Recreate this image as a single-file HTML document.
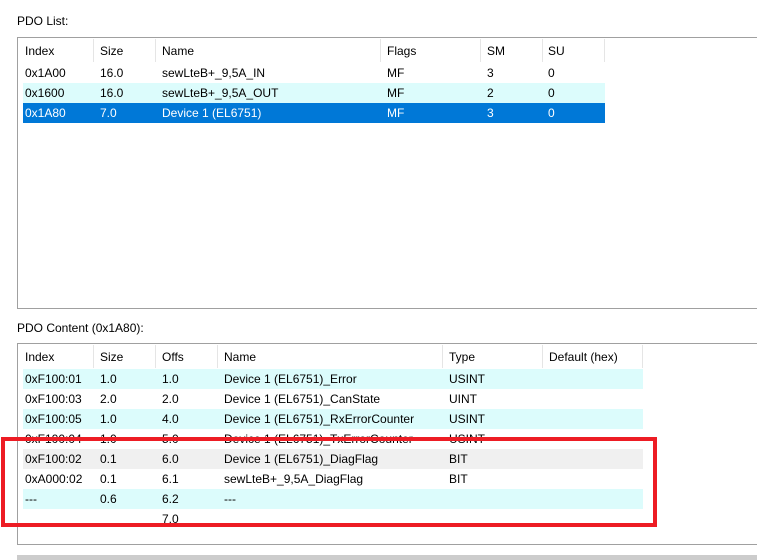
<!DOCTYPE html>
<html><head><style>
body{margin:0;width:757px;height:560px;overflow:hidden;background:#fff;font-family:"Liberation Sans",sans-serif;font-size:12px;color:#000;position:relative}
.a{position:absolute;white-space:nowrap}
.box{position:absolute;border:1px solid #a0a0a0;border-right:none;background:#fff}
.row{position:absolute;height:20px}
.sep{position:absolute;width:1px;background:#e5e5e5}
.t{position:absolute;line-height:20px}
</style></head><body>
<div class="a" style="left:17px;top:14px">PDO List:</div>
<div class="box" style="left:17px;top:37px;width:745px;height:270px"></div>
<div class="row" style="left:23px;top:83px;width:582px;background:#dcfcfc"></div>
<div class="row" style="left:23px;top:103px;width:582px;background:#0078d7"></div>
<div class="sep" style="left:93px;top:39px;height:23px"></div>
<div class="sep" style="left:155px;top:39px;height:23px"></div>
<div class="sep" style="left:380px;top:39px;height:23px"></div>
<div class="sep" style="left:480px;top:39px;height:23px"></div>
<div class="sep" style="left:542px;top:39px;height:23px"></div>
<div class="sep" style="left:604px;top:39px;height:23px"></div>
<div class="t" style="left:25px;top:41px">Index</div><div class="t" style="left:100px;top:41px">Size</div><div class="t" style="left:162px;top:41px">Name</div><div class="t" style="left:387px;top:41px">Flags</div><div class="t" style="left:487px;top:41px">SM</div><div class="t" style="left:548px;top:41px">SU</div>
<div class="t" style="left:25px;top:63px">0x1A00</div><div class="t" style="left:100px;top:63px">16.0</div><div class="t" style="left:162px;top:63px">sewLteB+_9,5A_IN</div><div class="t" style="left:387px;top:63px">MF</div><div class="t" style="left:487px;top:63px">3</div><div class="t" style="left:548px;top:63px">0</div>
<div class="t" style="left:25px;top:83px">0x1600</div><div class="t" style="left:100px;top:83px">16.0</div><div class="t" style="left:162px;top:83px">sewLteB+_9,5A_OUT</div><div class="t" style="left:387px;top:83px">MF</div><div class="t" style="left:487px;top:83px">2</div><div class="t" style="left:548px;top:83px">0</div>
<div style="color:#fff"><div class="t" style="left:25px;top:103px">0x1A80</div><div class="t" style="left:100px;top:103px">7.0</div><div class="t" style="left:162px;top:103px">Device 1 (EL6751)</div><div class="t" style="left:387px;top:103px">MF</div><div class="t" style="left:487px;top:103px">3</div><div class="t" style="left:548px;top:103px">0</div></div>

<div class="a" style="left:17px;top:321px">PDO Content (0x1A80):</div>
<div class="box" style="left:17px;top:343px;width:745px;height:200px"></div>
<div class="row" style="left:23px;top:369px;width:620px;background:#dcfcfc"></div>
<div class="row" style="left:23px;top:409px;width:620px;background:#dcfcfc"></div>
<div class="row" style="left:23px;top:449px;width:620px;background:#f0f0f0"></div>
<div class="row" style="left:23px;top:489px;width:620px;background:#dcfcfc"></div>
<div class="sep" style="left:93px;top:345px;height:23px"></div>
<div class="sep" style="left:155px;top:345px;height:23px"></div>
<div class="sep" style="left:217px;top:345px;height:23px"></div>
<div class="sep" style="left:442px;top:345px;height:23px"></div>
<div class="sep" style="left:542px;top:345px;height:23px"></div>
<div class="sep" style="left:642px;top:345px;height:23px"></div>
<div class="t" style="left:25px;top:347px">Index</div><div class="t" style="left:100px;top:347px">Size</div><div class="t" style="left:162px;top:347px">Offs</div><div class="t" style="left:224px;top:347px">Name</div><div class="t" style="left:449px;top:347px">Type</div><div class="t" style="left:549px;top:347px">Default (hex)</div>
<div class="t" style="left:25px;top:369px">0xF100:01</div><div class="t" style="left:100px;top:369px">1.0</div><div class="t" style="left:162px;top:369px">1.0</div><div class="t" style="left:224px;top:369px">Device 1 (EL6751)_Error</div><div class="t" style="left:449px;top:369px">USINT</div>
<div class="t" style="left:25px;top:389px">0xF100:03</div><div class="t" style="left:100px;top:389px">2.0</div><div class="t" style="left:162px;top:389px">2.0</div><div class="t" style="left:224px;top:389px">Device 1 (EL6751)_CanState</div><div class="t" style="left:449px;top:389px">UINT</div>
<div class="t" style="left:25px;top:409px">0xF100:05</div><div class="t" style="left:100px;top:409px">1.0</div><div class="t" style="left:162px;top:409px">4.0</div><div class="t" style="left:224px;top:409px">Device 1 (EL6751)_RxErrorCounter</div><div class="t" style="left:449px;top:409px">USINT</div>
<div class="t" style="left:25px;top:429px">0xF100:04</div><div class="t" style="left:100px;top:429px">1.0</div><div class="t" style="left:162px;top:429px">5.0</div><div class="t" style="left:224px;top:429px">Device 1 (EL6751)_TxErrorCounter</div><div class="t" style="left:449px;top:429px">USINT</div>
<div class="t" style="left:25px;top:449px">0xF100:02</div><div class="t" style="left:100px;top:449px">0.1</div><div class="t" style="left:162px;top:449px">6.0</div><div class="t" style="left:224px;top:449px">Device 1 (EL6751)_DiagFlag</div><div class="t" style="left:449px;top:449px">BIT</div>
<div class="t" style="left:25px;top:469px">0xA000:02</div><div class="t" style="left:100px;top:469px">0.1</div><div class="t" style="left:162px;top:469px">6.1</div><div class="t" style="left:224px;top:469px">sewLteB+_9,5A_DiagFlag</div><div class="t" style="left:449px;top:469px">BIT</div>
<div class="t" style="left:25px;top:489px">---</div><div class="t" style="left:100px;top:489px">0.6</div><div class="t" style="left:162px;top:489px">6.2</div><div class="t" style="left:224px;top:489px">---</div>
<div class="t" style="left:162px;top:509px">7.0</div>
<div class="a" style="left:1px;top:437px;width:648px;height:82px;border:4px solid #ed1c24"></div>
<div class="a" style="left:17px;top:555px;width:745px;height:5px;background:#cccccc"></div>
</body></html>
